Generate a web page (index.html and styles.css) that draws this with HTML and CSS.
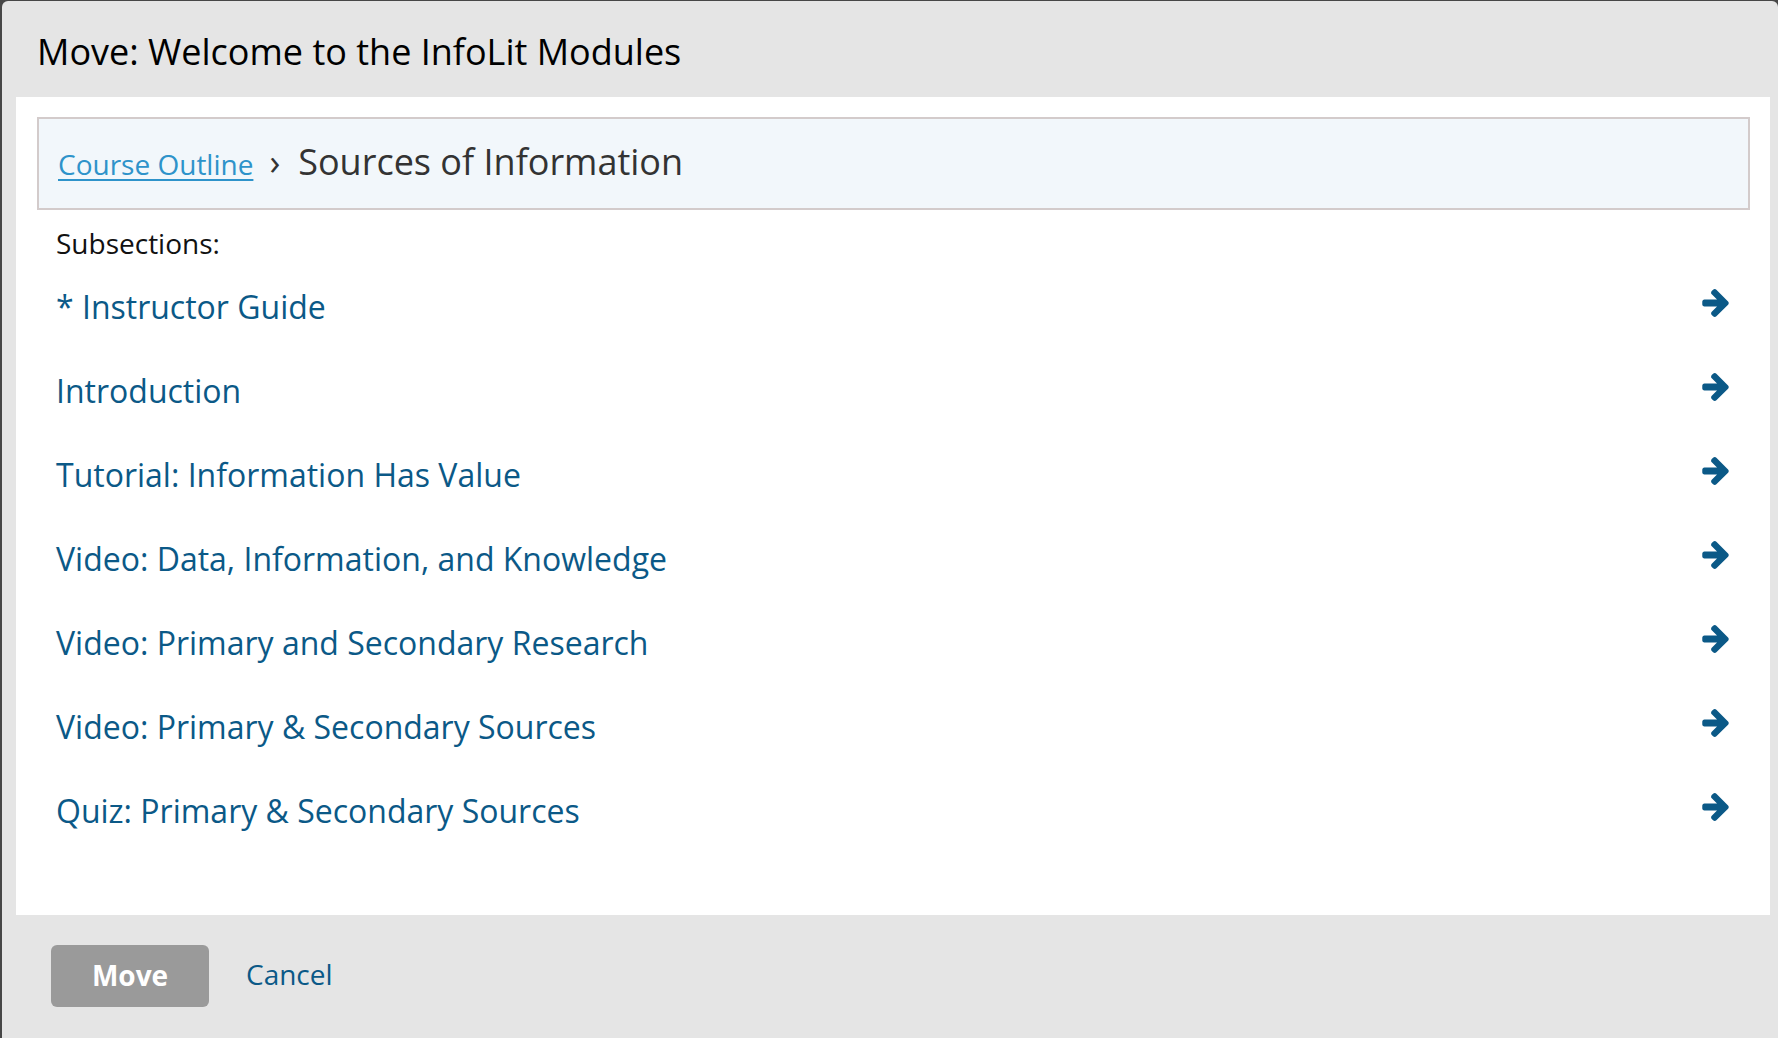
FILE: index.html
```html
<!DOCTYPE html>
<html lang="en">
<head>
<meta charset="utf-8">
<title>Move: Welcome to the InfoLit Modules</title>
<link rel="stylesheet" href="styles.css">
</head>
<body>
<div class="modal">
  <header class="modal-header">
    <h2 class="modal-title">Move: Welcome to the InfoLit Modules</h2>
  </header>
  <div class="modal-body">
    <nav class="breadcrumb">
      <a class="crumb-link" href="#">Course Outline</a>
      <span class="crumb-sep">›</span>
      <span class="crumb-current">Sources of Information</span>
    </nav>
    <div class="list-label">Subsections:</div>
    <ul class="xblock-list">
      <li class="xblock-row"><a class="xblock-link" href="#">* Instructor Guide</a><svg class="arrow" viewBox="0 181 1472 1558"><path d="M1472 960q0 54-37 91l-651 651q-39 37-91 37-51 0-90-37l-75-75q-38-38-38-91t38-91l293-293h-704q-52 0-84.5-37.5t-32.5-90.5v-128q0-53 32.5-90.5t84.5-37.5h704l-293-294q-38-36-38-90t38-90l75-75q38-38 90-38 53 0 91 38l651 651q37 35 37 90z"/></svg></li>
      <li class="xblock-row"><a class="xblock-link" href="#">Introduction</a><svg class="arrow" viewBox="0 181 1472 1558"><path d="M1472 960q0 54-37 91l-651 651q-39 37-91 37-51 0-90-37l-75-75q-38-38-38-91t38-91l293-293h-704q-52 0-84.5-37.5t-32.5-90.5v-128q0-53 32.5-90.5t84.5-37.5h704l-293-294q-38-36-38-90t38-90l75-75q38-38 90-38 53 0 91 38l651 651q37 35 37 90z"/></svg></li>
      <li class="xblock-row"><a class="xblock-link" href="#">Tutorial: Information Has Value</a><svg class="arrow" viewBox="0 181 1472 1558"><path d="M1472 960q0 54-37 91l-651 651q-39 37-91 37-51 0-90-37l-75-75q-38-38-38-91t38-91l293-293h-704q-52 0-84.5-37.5t-32.5-90.5v-128q0-53 32.5-90.5t84.5-37.5h704l-293-294q-38-36-38-90t38-90l75-75q38-38 90-38 53 0 91 38l651 651q37 35 37 90z"/></svg></li>
      <li class="xblock-row"><a class="xblock-link" href="#">Video: Data, Information, and Knowledge</a><svg class="arrow" viewBox="0 181 1472 1558"><path d="M1472 960q0 54-37 91l-651 651q-39 37-91 37-51 0-90-37l-75-75q-38-38-38-91t38-91l293-293h-704q-52 0-84.5-37.5t-32.5-90.5v-128q0-53 32.5-90.5t84.5-37.5h704l-293-294q-38-36-38-90t38-90l75-75q38-38 90-38 53 0 91 38l651 651q37 35 37 90z"/></svg></li>
      <li class="xblock-row"><a class="xblock-link" href="#">Video: Primary and Secondary Research</a><svg class="arrow" viewBox="0 181 1472 1558"><path d="M1472 960q0 54-37 91l-651 651q-39 37-91 37-51 0-90-37l-75-75q-38-38-38-91t38-91l293-293h-704q-52 0-84.5-37.5t-32.5-90.5v-128q0-53 32.5-90.5t84.5-37.5h704l-293-294q-38-36-38-90t38-90l75-75q38-38 90-38 53 0 91 38l651 651q37 35 37 90z"/></svg></li>
      <li class="xblock-row"><a class="xblock-link" href="#">Video: Primary &amp; Secondary Sources</a><svg class="arrow" viewBox="0 181 1472 1558"><path d="M1472 960q0 54-37 91l-651 651q-39 37-91 37-51 0-90-37l-75-75q-38-38-38-91t38-91l293-293h-704q-52 0-84.5-37.5t-32.5-90.5v-128q0-53 32.5-90.5t84.5-37.5h704l-293-294q-38-36-38-90t38-90l75-75q38-38 90-38 53 0 91 38l651 651q37 35 37 90z"/></svg></li>
      <li class="xblock-row"><a class="xblock-link" href="#">Quiz: Primary &amp; Secondary Sources</a><svg class="arrow" viewBox="0 181 1472 1558"><path d="M1472 960q0 54-37 91l-651 651q-39 37-91 37-51 0-90-37l-75-75q-38-38-38-91t38-91l293-293h-704q-52 0-84.5-37.5t-32.5-90.5v-128q0-53 32.5-90.5t84.5-37.5h704l-293-294q-38-36-38-90t38-90l75-75q38-38 90-38 53 0 91 38l651 651q37 35 37 90z"/></svg></li>
    </ul>
  </div>
  <footer class="modal-footer">
    <button class="btn-move" type="button">Move</button>
    <a class="btn-cancel" href="#">Cancel</a>
  </footer>
</div>
</body>
</html>
```

FILE: styles.css
```css
html, body {
  margin: 0;
  padding: 0;
  height: 100%;
}

body {
  background: #474747;
  font-family: "Open Sans", "Noto Sans", sans-serif;
  overflow: hidden;
}

.modal {
  margin: 1px 0 0 2px;
  height: 1045px;
  background: #e5e5e5;
  border-radius: 6px;
  box-sizing: border-box;
  padding: 0 8px 0 14px;
}

.modal-header {
  padding: 26px 0 21px 21px;
}

.modal-title {
  margin: 0;
  font-size: 36px;
  line-height: 49px;
  font-weight: 400;
  color: #000;
}

.modal-body {
  background: #fff;
  padding: 20px 20px 62px 21px;
}

.breadcrumb {
  display: flex;
  align-items: baseline;
  background: #f2f7fb;
  border: 2px solid #d3cbcb;
  padding: 18px 19px 19px;
}

.crumb-link {
  font-size: 28px;
  line-height: 49px;
  color: #2e93ca;
  text-decoration: underline;
  text-underline-offset: 4px;
  text-decoration-thickness: 2px;
}

.crumb-sep {
  font-size: 36px;
  line-height: 49px;
  color: #333;
  margin: 0 18px 0 16px;
}

.crumb-current {
  font-size: 36px;
  line-height: 49px;
  color: #333;
}

.list-label {
  margin-top: 15px;
  padding-left: 19px;
  font-size: 28px;
  line-height: 36px;
  color: #111;
}

.xblock-list {
  list-style: none;
  margin: 4px 0 0;
  padding: 0 21px 0 19px;
}

.xblock-row {
  display: flex;
  justify-content: space-between;
  align-items: flex-start;
  height: 84px;
}

.xblock-link {
  font-size: 32px;
  line-height: 84px;
  color: #0b5987;
  text-decoration: none;
}

.arrow {
  width: 27px;
  height: 28px;
  margin-top: 24px;
  fill: #0b5987;
  flex: none;
}

.modal-footer {
  display: flex;
  align-items: center;
  gap: 37px;
  padding: 30px 0 0 35px;
}

.btn-move {
  width: 158px;
  height: 62px;
  border: none;
  border-radius: 6px;
  background: #9a9a9a;
  color: #fff;
  font-family: "Open Sans", "Noto Sans", sans-serif;
  font-size: 28px;
  line-height: 38px;
  font-weight: 700;
  padding: 0 0 3px;
}

.btn-cancel {
  font-size: 28px;
  line-height: 38px;
  color: #0b5987;
  text-decoration: none;
  padding-bottom: 4px;
}
```
